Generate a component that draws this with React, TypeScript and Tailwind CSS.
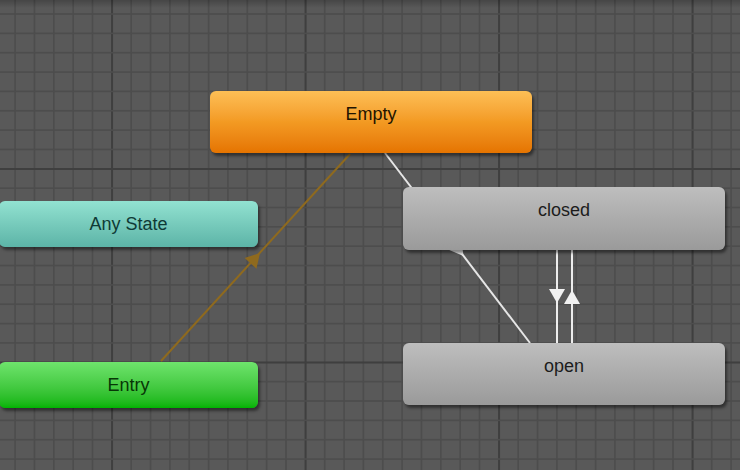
import React from "react";

const MINOR = 19.35;
const X0 = 15.3;
const Y0 = 14.2;

type Pt = [number, number];

function arrowHead(tip: Pt, from: Pt, len = 14, half = 8) {
  const dx = tip[0] - from[0];
  const dy = tip[1] - from[1];
  const d = Math.hypot(dx, dy);
  const ux = dx / d;
  const uy = dy / d;
  const bx = tip[0] - ux * len;
  const by = tip[1] - uy * len;
  const px = -uy * half;
  const py = ux * half;
  return `${tip[0]},${tip[1]} ${bx + px},${by + py} ${bx - px},${by - py}`;
}

function Grid() {
  const cols = Array.from({ length: 40 }, (_, i) => X0 + (i - 1) * MINOR);
  const rows = Array.from({ length: 26 }, (_, i) => Y0 + (i - 1) * MINOR);
  return (
    <g>
      {cols.map((x, i) => {
        const major = (i - 1 - 5) % 10 === 0;
        return (
          <rect
            key={"c" + i}
            x={x - 1}
            y={0}
            width={major ? 2 : 1.6}
            height={470}
            fill={major ? "#3f3f3f" : "#4d4d4d"}
          />
        );
      })}
      {rows.map((y, i) => {
        const major = (i - 1 - 8) % 10 === 0;
        return (
          <rect
            key={"r" + i}
            x={0}
            y={y - 1}
            width={740}
            height={major ? 2 : 1.6}
            fill={major ? "#3f3f3f" : "#4d4d4d"}
          />
        );
      })}
    </g>
  );
}

function Node({
  label,
  className,
  text,
}: {
  label: string;
  className: string;
  text: string;
}) {
  return (
    <div
      className={`absolute rounded-[6px] pt-[12px] text-center text-[18px] leading-[22px] shadow-[2px_3px_3px_rgba(0,0,0,0.45)] ${className}`}
      style={{ fontFamily: '"Liberation Sans", Arial, sans-serif' }}
    >
      <span className={text}>{label}</span>
    </div>
  );
}

export default function App() {
  return (
    <div className="relative h-[470px] w-[740px] overflow-hidden bg-[#595959]">
      <svg className="absolute inset-0" width={740} height={470}>
        <Grid />
        {/* Entry -> Empty */}
        <line x1={161} y1={361} x2={350} y2={154} stroke="#8f6a1e" strokeWidth={2} />
        <polygon points={arrowHead([260, 253], [161, 361])} fill="#8f6a1e" />
        {/* Empty -> open (behind closed) */}
        <line x1={385} y1={153} x2={530} y2={343} stroke="#e6e6e6" strokeWidth={2} />
        <polygon points={arrowHead([463.5, 256], [385, 153])} fill="#ececec" />
        {/* closed <-> open */}
        <line x1={557} y1={250} x2={557} y2={343} stroke="#ededed" strokeWidth={2} />
        <line x1={572} y1={250} x2={572} y2={343} stroke="#ededed" strokeWidth={2} />
        <polygon points="557,303 549,289 565,289" fill="#f2f2f2" />
        <polygon points="572,290 564,304 580,304" fill="#f2f2f2" />
      </svg>
      <div className="pointer-events-none absolute inset-x-0 top-0 h-[8px] bg-gradient-to-b from-[rgba(0,0,0,0.22)] to-transparent" />

      <Node
        label="Empty"
        className="left-[210px] top-[91px] h-[62px] w-[322px] bg-gradient-to-b from-[#fdbf55] via-[#f39a22] to-[#e57400]"
        text="text-[#231400]"
      />
      <Node
        label="Any State"
        className="left-[-1px] top-[201px] h-[46px] w-[259px] bg-gradient-to-b from-[#92e2d1] to-[#5cb4a7]"
        text="text-[#0f3a35]"
      />
      <Node
        label="Entry"
        className="left-[-1px] top-[362px] h-[46px] w-[259px] bg-gradient-to-b from-[#6ee46c] to-[#00b400]"
        text="text-[#073606]"
      />
      <Node
        label="closed"
        className="left-[403px] top-[187px] h-[63px] w-[322px] bg-gradient-to-b from-[#bebebe] to-[#9a9a9a]"
        text="text-[#1c1c1c]"
      />
      <Node
        label="open"
        className="left-[403px] top-[343px] h-[62px] w-[322px] bg-gradient-to-b from-[#bebebe] to-[#9a9a9a]"
        text="text-[#1c1c1c]"
      />
    </div>
  );
}
